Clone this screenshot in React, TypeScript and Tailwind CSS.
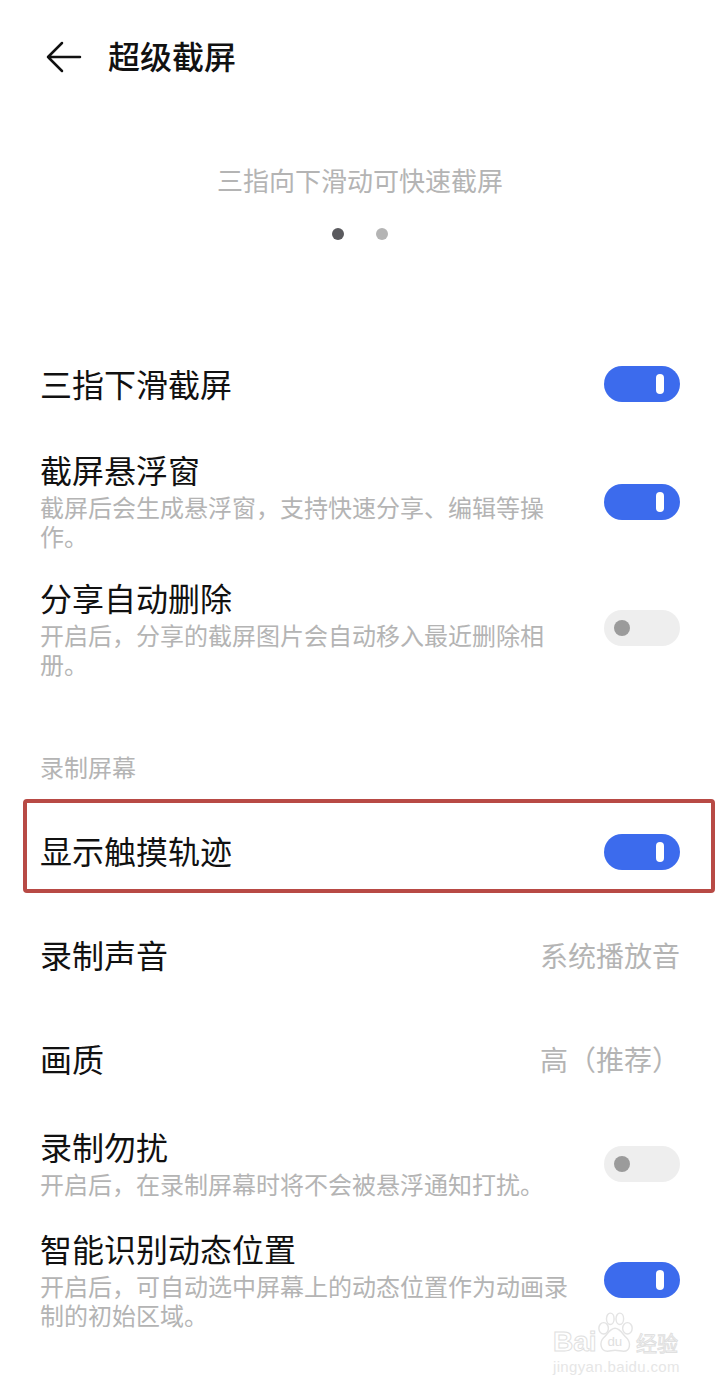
import React from 'react';

const Toggle: React.FC<{ on?: boolean; className?: string }> = ({ on, className = '' }) => (
  on ? (
    <div className={`flex h-[36px] w-[76px] shrink-0 items-center justify-end rounded-full bg-[#3c6bed] pr-[16px] ${className}`}>
      <div className="h-[20px] w-[8px] rounded-full bg-white" />
    </div>
  ) : (
    <div className={`flex h-[36px] w-[76px] shrink-0 items-center rounded-full bg-[#eeeeee] pl-[10px] ${className}`}>
      <div className="h-[16px] w-[16px] rounded-full bg-[#9b9b9b]" />
    </div>
  )
);

const SettingRow: React.FC<{ title: string; sub?: string; on: boolean; className?: string; toggleClass?: string }> = ({
  title,
  sub,
  on,
  className = '',
  toggleClass = '',
}) => (
  <div className={`flex items-center justify-between pl-[40px] pr-[40px] ${className}`}>
    <div className={`w-[530px] ${sub ? 'pb-[2px]' : 'pb-[4px]'}`}>
      <div className="text-[32px] leading-[36px] text-[#111111]">{title}</div>
      {sub && <div className="mt-[5px] text-[24px] leading-[29px] text-[#b4b4b4]">{sub}</div>}
    </div>
    <Toggle on={on} className={toggleClass} />
  </div>
);

const ValueRow: React.FC<{ title: string; value: string; className?: string }> = ({ title, value, className = '' }) => (
  <div className={`flex h-[40px] items-start justify-between pl-[40px] pr-[40px] ${className}`}>
    <div className="text-[32px] leading-[36px] text-[#111111]">{title}</div>
    <div className="w-[140px] whitespace-nowrap text-[28px] leading-[38px] text-[#b4b4b4]">{value}</div>
  </div>
);

const Watermark = () => (
  <div className="absolute left-[553px] top-[1310px] w-[135px] text-[#e2e2e2]">
    <div className="flex h-[48px] items-end whitespace-nowrap">
      <span className="w-[43px] shrink-0 text-[28px] font-bold leading-[32px] text-white [-webkit-text-stroke:1px_#e0e0e0] [font-family:'Liberation_Sans',sans-serif]">
        Bai
      </span>
      <svg width="40" height="46" viewBox="0 0 42 48" className="shrink-0" fill="none" stroke="#e4e4e4" strokeWidth="1.5">
        <ellipse cx="8" cy="17" rx="5" ry="6" />
        <ellipse cx="15" cy="7" rx="4" ry="6" />
        <ellipse cx="25" cy="7" rx="4" ry="6" />
        <ellipse cx="33" cy="17" rx="5" ry="6" />
        <path d="M20 17c-5 0-8 6-12 10-5 5-3 14 4 14 3 0 5-1 8-1s6 1 9 1c7 0 8-9 3-14-4-4-7-10-12-10z" />
        <text x="12" y="36" fontSize="14" fontFamily="Liberation Sans" fill="#e0e0e0" stroke="none">du</text>
      </svg>
      <span className="shrink-0 text-[21px] leading-[32px] text-white [-webkit-text-stroke:1px_#e0e0e0]">经验</span>
    </div>
    <div className="whitespace-nowrap text-[15px] leading-[18px] tracking-[0.35px] text-[#e6e6e6] [font-family:'Liberation_Sans',sans-serif]">
      jingyan.baidu.com
    </div>
  </div>
);

export default function App() {
  return (
    <div className="relative h-[1391px] w-[720px] overflow-hidden bg-white [font-family:'Noto_Sans_CJK_SC','Liberation_Sans',sans-serif]" lang="zh-CN">
      <div className="flex h-[114px] items-center pl-[46px]">
        <svg width="36" height="32" viewBox="0 0 36 32" fill="none" stroke="#111111" strokeWidth="2.5" strokeLinecap="round" strokeLinejoin="round">
          <path d="M34 16H2M16 2L2 16l14 14" />
        </svg>
        <div className="mb-[4px] ml-[26px] text-[32px] font-medium leading-[36px] text-[#111111]">超级截屏</div>
      </div>

      <div className="mt-[46px] text-center text-[26px] leading-[40px] text-[#b4b4b4]">三指向下滑动可快速截屏</div>
      <div className="mt-[28px] flex justify-center gap-[32px]">
        <div className="h-[12px] w-[12px] rounded-full bg-[#5a5a5e]" />
        <div className="h-[12px] w-[12px] rounded-full bg-[#b4b4b4]" />
      </div>

      <SettingRow className="mt-[125px]" title="三指下滑截屏" on toggleClass="mb-[2px]" />
      <SettingRow className="mt-[46px]" title="截屏悬浮窗" sub="截屏后会生成悬浮窗，支持快速分享、编辑等操作。" on />
      <SettingRow className="mt-[27px]" title="分享自动删除" sub="开启后，分享的截屏图片会自动移入最近删除相册。" on={false} toggleClass="mb-[3px]" />

      <div className="mt-[72px] pl-[40px] text-[24px] leading-[30px] text-[#b4b4b4]">录制屏幕</div>

      <div className="ml-[23px] mt-[17px] flex h-[94px] w-[692px] items-center justify-between rounded-[4px] border-4 border-[#b84a45] pl-[13px] pr-[31px] pt-[12px]">
        <div className="pb-[4px] text-[32px] leading-[36px] text-[#111111]">显示触摸轨迹</div>
        <Toggle on />
      </div>

      <ValueRow className="mt-[43px]" title="录制声音" value="系统播放音" />
      <ValueRow className="mt-[64px]" title="画质" value="高（推荐）" />

      <SettingRow className="mt-[48px]" title="录制勿扰" sub="开启后，在录制屏幕时将不会被悬浮通知打扰。" on={false} />
      <SettingRow className="mt-[30px]" title="智能识别动态位置" sub="开启后，可自动选中屏幕上的动态位置作为动画录制的初始区域。" on toggleClass="mb-[2px]" />

      <Watermark />
    </div>
  );
}
